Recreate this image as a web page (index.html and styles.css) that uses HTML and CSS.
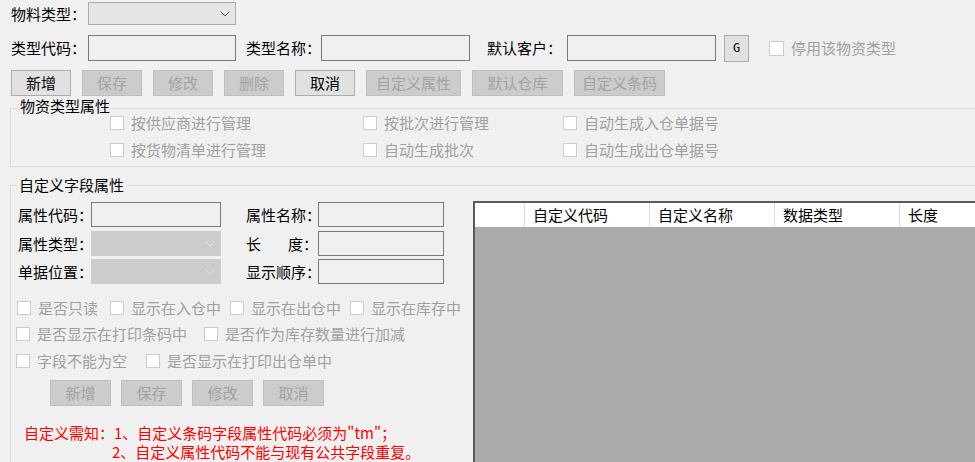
FILE: index.html
```html
<!DOCTYPE html>
<html lang="zh-CN">
<head>
<meta charset="utf-8">
<title>物料类型</title>
<link rel="stylesheet" href="styles.css">
</head>
<body>
<div class="form">
  <div class="row row1">
    <span class="lbl w77">物料类型：</span>
    <div class="combo combo-top">
      <svg class="chev" width="10" height="6" viewBox="0 0 10 6"><path d="M0.5 0.5 L5 5 L9.5 0.5" fill="none" stroke="#606060" stroke-width="1"/></svg>
    </div>
  </div>

  <div class="row row2">
    <span class="lbl w77">类型代码：</span>
    <div class="tb w148"></div>
    <span class="lbl lbl-name">类型名称：</span>
    <div class="tb w149"></div>
    <span class="lbl lbl-cust">默认客户：</span>
    <div class="tb w149"></div>
    <button class="btn btn-g">G</button>
    <label class="chk chk-stop"><span class="box"></span><span class="dis">停用该物资类型</span></label>
  </div>

  <div class="row toolbar">
    <button class="btn w60">新增</button>
    <button class="btn dis-btn w60">保存</button>
    <button class="btn dis-btn w60">修改</button>
    <button class="btn dis-btn w60">删除</button>
    <button class="btn w60">取消</button>
    <button class="btn dis-btn w95">自定义属性</button>
    <button class="btn dis-btn w91">默认仓库</button>
    <button class="btn dis-btn w91">自定义条码</button>
  </div>

  <div class="group g1">
    <div class="gtitle t1">物资类型属性</div>
    <div class="g1-grid">
      <label class="chk"><span class="box"></span><span class="dis">按供应商进行管理</span></label>
      <label class="chk"><span class="box"></span><span class="dis">按批次进行管理</span></label>
      <label class="chk"><span class="box"></span><span class="dis">自动生成入仓单据号</span></label>
      <label class="chk"><span class="box"></span><span class="dis">按货物清单进行管理</span></label>
      <label class="chk"><span class="box"></span><span class="dis">自动生成批次</span></label>
      <label class="chk"><span class="box"></span><span class="dis">自动生成出仓单据号</span></label>
    </div>
  </div>

  <div class="group g2">
    <div class="gtitle t2">自定义字段属性</div>
    <div class="g2-body">
      <div class="panel">
        <div class="frow">
          <span class="lbl fl1">属性代码：</span>
          <div class="tb w130"></div>
          <span class="lbl fl2">属性名称：</span>
          <div class="tb w126"></div>
        </div>
        <div class="frow mt4">
          <span class="lbl fl1">属性类型：</span>
          <div class="combo combo-dis w130">
            <svg class="chev" width="10" height="6" viewBox="0 0 10 6"><path d="M0.5 0.5 L5 5 L9.5 0.5" fill="none" stroke="#e2e2e2" stroke-width="1"/></svg>
          </div>
          <span class="lbl fl2 spread"><span>长</span><span>度：</span></span>
          <div class="tb w126"></div>
        </div>
        <div class="frow mt3">
          <span class="lbl fl1">单据位置：</span>
          <div class="combo combo-dis w130">
            <svg class="chev" width="10" height="6" viewBox="0 0 10 6"><path d="M0.5 0.5 L5 5 L9.5 0.5" fill="none" stroke="#e2e2e2" stroke-width="1"/></svg>
          </div>
          <span class="lbl fl2">显示顺序：</span>
          <div class="tb w126"></div>
        </div>

        <div class="crow crow1">
          <label class="chk mr3"><span class="box"></span><span class="dis">是否只读</span></label>
          <label class="chk"><span class="box"></span><span class="dis">显示在入仓中</span></label>
          <label class="chk"><span class="box"></span><span class="dis">显示在出仓中</span></label>
          <label class="chk"><span class="box"></span><span class="dis">显示在库存中</span></label>
        </div>
        <div class="crow crow2">
          <label class="chk"><span class="box"></span><span class="dis">是否显示在打印条码中</span></label>
          <label class="chk"><span class="box"></span><span class="dis">是否作为库存数量进行加减</span></label>
        </div>
        <div class="crow crow3">
          <label class="chk"><span class="box"></span><span class="dis">字段不能为空</span></label>
          <label class="chk"><span class="box"></span><span class="dis">是否显示在打印出仓单中</span></label>
        </div>

        <div class="brow">
          <button class="btn dis-btn w61">新增</button>
          <button class="btn dis-btn w61">保存</button>
          <button class="btn dis-btn w61">修改</button>
          <button class="btn dis-btn w61">取消</button>
        </div>

        <div class="note">
          <div class="note1">自定义需知：1、自定义条码字段属性代码必须为"tm"；</div>
          <div class="note2">2、自定义属性代码不能与现有公共字段重复。</div>
        </div>
      </div>

      <div class="grid">
        <div class="ghead">
          <div class="gcell rowhead"></div>
          <div class="gcell">自定义代码</div>
          <div class="gcell">自定义名称</div>
          <div class="gcell">数据类型</div>
          <div class="gcell last">长度</div>
        </div>
      </div>
    </div>
  </div>
</div>
</body>
</html>
```

FILE: styles.css
```css
* { box-sizing: border-box; }
html, body { margin: 0; padding: 0; }
body {
  width: 975px;
  height: 462px;
  overflow: hidden;
  background: #f0f0f0;
  color: #000;
  font-family: "Noto Sans CJK SC", "Microsoft YaHei", sans-serif;
  font-size: 15px;
  line-height: 16px;
}
.form { padding-top: 2px; }
.row { display: flex; align-items: center; }
.lbl { white-space: nowrap; flex-shrink: 0; }
.w77 { width: 77px; }
.w148 { width: 148px; }
.w149 { width: 149px; }
.w130 { width: 130px; }
.w126 { width: 126px; }
.w60 { width: 60px; }
.w61 { width: 61px; }
.w95 { width: 95px; }
.w91 { width: 91px; }

/* row 1 */
.row1 { height: 23px; padding-left: 11px; }
.combo {
  flex-shrink: 0;
  display: flex;
  align-items: center;
  justify-content: flex-end;
  padding-right: 5px;
}
.combo-top {
  width: 148px;
  height: 23px;
  background: #e5e5e5;
  border: 1px solid #acacac;
}
.combo-dis {
  height: 25px;
  background: #cccccc;
  border: 1px solid #cccccc;
}
.chev { display: block; }

/* row 2 */
.row2 { margin-top: 10px; height: 26px; padding-left: 11px; }
.tb {
  flex-shrink: 0;
  height: 26px;
  background: #f0f0f0;
  border: 1px solid #7a7a7a;
}
.lbl-name { margin-left: 10px; width: 75px; }
.lbl-cust { margin-left: 17px; width: 80px; }

.btn {
  flex-shrink: 0;
  height: 26px;
  padding: 0;
  margin: 0;
  background: #e1e1e1;
  border: 1px solid #adadad;
  color: #000;
  font-family: inherit;
  font-size: 15px;
  line-height: 16px;
}
.dis-btn {
  background: #cccccc;
  border-color: #bfbfbf;
  color: #a3a3a3;
}
.btn-g {
  margin-left: 8px;
  width: 25px;
  height: 27px;
  font-family: "DejaVu Sans Mono", "Liberation Mono", monospace;
  font-size: 12px;
}

.chk { display: flex; align-items: center; white-space: nowrap; }
.box {
  width: 14px;
  height: 14px;
  flex-shrink: 0;
  background: #ffffff;
  border: 1px solid #cccccc;
  margin-right: 7px;
}
.dis { color: #a0a0a0; }
.chk-stop { margin-left: 20px; }
.chk-stop .box { width: 15px; height: 15px; margin-right: 7px; }

/* toolbar */
.toolbar { margin-top: 9px; padding-left: 11px; gap: 11px; }

/* group boxes (open on the right / bottom where they run past the window) */
.group {
  margin-left: 10px;
  border: 1px solid #dcdcdc;
  border-right: none;
}
.gtitle {
  display: block;
  width: max-content;
  background: #f0f0f0;
  line-height: 18px;
  padding: 0 2px;
}
.g1 { margin-top: 12px; padding-bottom: 8px; }
.t1 { margin-top: -12px; margin-left: 7px; }
.g1-grid {
  display: grid;
  grid-template-columns: 253px 200px auto;
  grid-auto-rows: 16px;
  row-gap: 11px;
  padding-left: 99px;
}

.g2 { margin-top: 18px; height: 277px; border-bottom: none; }
.t2 { margin-top: -10px; margin-left: 6px; }
.g2-body { display: flex; align-items: flex-start; }
.panel { width: 462px; flex-shrink: 0; padding-top: 8px; }
.frow { display: flex; align-items: center; height: 25px; padding-left: 7px; }
.frow .tb { height: 25px; }
.mt4 { margin-top: 4px; }
.mt3 { margin-top: 3px; }
.fl1 { width: 73px; }
.fl2 { width: 72px; margin-left: 25px; }
.spread { display: flex; justify-content: space-between; }

.crow { display: flex; align-items: center; height: 16px; }
.crow1 { margin-top: 16px; padding-left: 6px; gap: 9px; }
.mr3 { margin-right: 3px; }
.crow2 { margin-top: 10px; padding-left: 5px; gap: 17px; }
.crow3 { margin-top: 11px; padding-left: 5px; gap: 19px; }

.brow { display: flex; margin-top: 11px; padding-left: 39px; gap: 10px; }

.note { margin-top: 17px; color: #ff0000; line-height: 19px; }
.note1 { padding-left: 13px; }
.note2 { padding-left: 101px; }

/* data grid */
.grid {
  flex: 1;
  margin-top: 7px;
  height: 261px;
  background: #ababab;
  border-top: 2px solid #5a5a5a;
  border-left: 2px solid #5a5a5a;
}
.ghead { display: flex; height: 24px; background: #ffffff; overflow: hidden; }
.gcell {
  width: 125px;
  flex-shrink: 0;
  display: flex;
  align-items: center;
  padding-left: 8px;
  border-left: 1px solid #dcdcdc;
  white-space: nowrap;
}
.gcell.rowhead { width: 49px; border-left: none; padding: 0; }
.gcell.last { flex: 1 1 auto; width: auto; }
```
